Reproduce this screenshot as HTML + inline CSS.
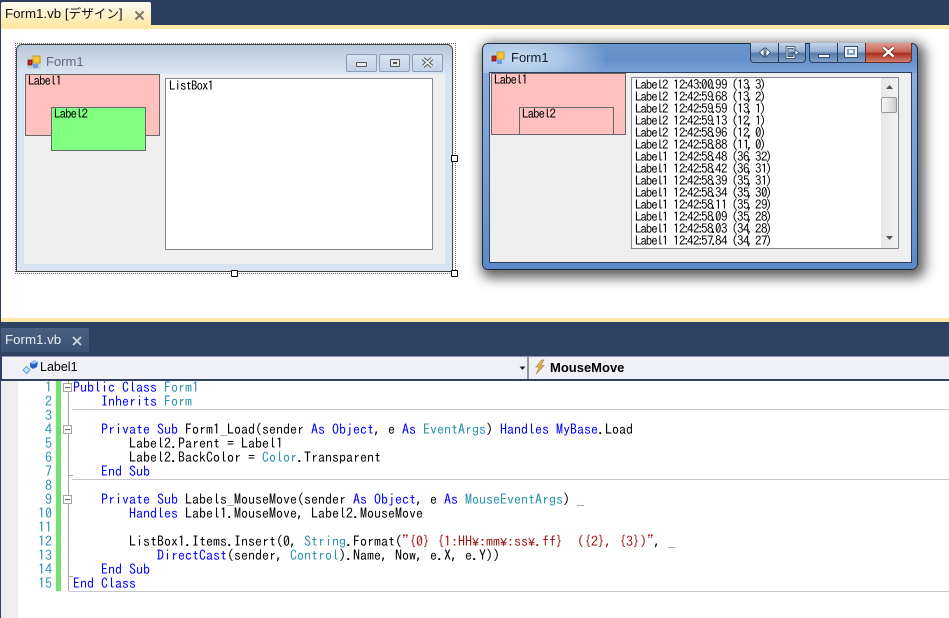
<!DOCTYPE html>
<html><head><meta charset="utf-8">
<style>
html,body{margin:0;padding:0;background:#fff}
body{width:949px;height:618px;position:relative;overflow:hidden;font-family:"IPAGothic","Liberation Sans",sans-serif}
div,span.a{position:absolute;box-sizing:border-box}
.t{white-space:pre;font-size:13px;letter-spacing:-1px;line-height:12px;color:#000}
.ui{font-family:"Liberation Sans","Noto Sans CJK JP",sans-serif;white-space:pre}
.c{position:absolute;left:73px;white-space:pre;font:14px/14px "IPAGothic","Liberation Mono",monospace;color:#000;height:14px}
.n{position:absolute;left:17px;width:35px;text-align:right;white-space:pre;font:14px/14px "IPAGothic","Liberation Mono",monospace;color:#2b91af;height:14px}
b{font-weight:normal;color:#0000ff}
i{font-style:normal;color:#2b91af}
u{text-decoration:none;color:#a31515}
var{font-style:normal;display:inline-block;width:7px;font-family:"Liberation Mono",monospace;font-size:12px;line-height:12px}
.h{width:7px;height:7px;background:#fff;border:1.5px solid #000;border-radius:1px}
.wb{border:1px solid #8a9db8;border-radius:2px;background:linear-gradient(#d9e4f1,#c2d2e6);height:18px;top:54px;width:31px}
.row{position:absolute;left:635px;height:12px}
.row span{position:absolute;top:0;white-space:pre;font:13px/12px "IPAGothic",sans-serif;letter-spacing:-.5px;color:#000}
.row span:first-child{letter-spacing:-1.1px}
em{font-style:normal;display:inline-block;width:2px;text-indent:-2px}
dfn{font-style:normal;display:inline-block;width:4px;text-indent:-1.5px}
cite{font-style:normal;display:inline-block;width:6px;text-indent:-2px}
</style></head><body>

<!-- top navy -->
<div style="left:0;top:0;width:949px;height:25px;background:#2d3f5e"></div>
<div style="left:1px;top:2px;width:150px;height:23px;border-radius:2px 2px 0 0;background:linear-gradient(#fffcf3 0,#fff3d3 45%,#ffe8a6 100%)"></div>
<div class="ui" style="left:5px;top:5px;font-size:13.3px;line-height:17px;color:#111">Form1.vb [<span style="font-size:12.6px">デザイン</span>]</div>
<svg style="position:absolute;left:134px;top:10px" width="11" height="11"><path d="M1.5 1.5L9.5 9.5M9.5 1.5L1.5 9.5" stroke="#7d7663" stroke-width="2"/></svg>
<div style="left:1px;top:25px;width:948px;height:4px;background:#ffe8a6"></div>
<div style="left:0;top:25px;width:1px;height:297px;background:#2d3f5e"></div>
<div style="left:1px;top:318px;width:948px;height:4px;background:#ffe8a6"></div>

<!-- Designer form -->
<div style="left:15px;top:43px;width:441px;height:231px;border:1px dotted #666"></div>
<div style="left:16px;top:44px;width:437px;height:78px;border:1px solid #444;border-bottom:none;border-radius:6px 6px 0 0;background:linear-gradient(#b9c8da,#d8e4f2 36%,#d8e4f2)"></div>
<div style="left:16px;top:122px;width:437px;height:150px;border:1px solid #444;border-top:none;background:#d8e4f2"></div>
<div style="left:24px;top:74px;width:421px;height:190px;background:#efefef"></div>
<svg style="position:absolute;left:27px;top:55px" width="14" height="14"><rect width="14" height="14" fill="#c8ced6"/><rect x="6" y="1" width="7" height="7" fill="#f6c530" stroke="#b08820" stroke-width=".7"/><rect x="1" y="5" width="4" height="5" fill="#cc2222" stroke="#771111" stroke-width=".7"/><rect x="6" y="9" width="5" height="4" fill="#6a9ee8"/></svg>
<div class="ui" style="left:46px;top:54px;font-size:13px;line-height:16px;color:#5f6a78">Form1</div>
<div class="wb" style="left:346px"></div>
<div class="wb" style="left:379px"></div>
<div class="wb" style="left:412px"></div>
<div style="left:356px;top:62px;width:11px;height:5px;background:#e8ecf2;border:1px solid #555;border-radius:1px"></div>
<div style="left:390px;top:59px;width:10px;height:8px;border:1.5px solid #555;border-radius:1px;background:#dde6f1"></div>
<div style="left:393px;top:62px;width:4px;height:2px;background:#555"></div>
<svg style="position:absolute;left:421px;top:57px" width="13" height="11"><path d="M2 1.5L11 9.5M11 1.5L2 9.5" stroke="#555" stroke-width="3.8"/><path d="M2 1.5L11 9.5M11 1.5L2 9.5" stroke="#eef2f6" stroke-width="1.8"/></svg>

<div style="left:25px;top:74px;width:135px;height:62px;background:#ffc0c0;border:1px solid #666"></div>
<div class="t" style="left:28px;top:75px">Label1</div>
<div style="left:51px;top:107px;width:95px;height:44px;background:#80ff80;border:1px solid #666"></div>
<div class="t" style="left:54px;top:108px">Label2</div>
<div style="left:165px;top:78px;width:268px;height:172px;background:#fff;border:1px solid #828790"></div>
<div class="t" style="left:169px;top:80px">ListBox1</div>

<div class="h" style="left:451px;top:155px"></div>
<div class="h" style="left:231px;top:270px"></div>
<div class="h" style="left:451px;top:270px"></div>

<!-- Running form -->
<div style="left:482px;top:43px;width:436px;height:227px;border-radius:6px;border:1px solid #1c2b3d;box-shadow:3px 4px 12px 4px rgba(0,0,0,.62);background:linear-gradient(90deg,#a9c3e4 0,#a9c3e4 8%,#6590c8 30%,#5f8cc8 70%,#7aa0d4 100%)"></div>
<div style="left:483px;top:44px;width:434px;height:29px;border-radius:5px 5px 0 0;background:radial-gradient(ellipse 90px 36px at 35px 14px,#c8daef 0,#a9c5e6 50%,rgba(100,145,200,0) 100%),linear-gradient(#6a94ca,#6390cb 55%,#7ba3d6)"></div>
<div style="left:483px;top:73px;width:434px;height:196px;border-radius:0 0 5px 5px;background:linear-gradient(#8aaddc,#6b97d0 70%,#5b8acb)"></div>
<div style="left:489px;top:72px;width:423px;height:191px;background:#efefef;border:1px solid #2b3f58"></div>
<svg style="position:absolute;left:491px;top:51px" width="14" height="14"><rect x="1" y="5" width="4" height="5" fill="#cc2222" stroke="#771111" stroke-width=".7"/><rect x="6" y="1" width="7" height="7" fill="#f6c530" stroke="#b08820" stroke-width=".7"/><rect x="6" y="9" width="5" height="4" fill="#6a9ee8"/></svg>
<div class="ui" style="left:511px;top:50px;font-size:13px;line-height:16px;color:#0c1a30">Form1</div>

<div style="left:750px;top:43px;width:56px;height:20px;border:1px solid #2b3f58;border-top:none;border-radius:0 0 4px 4px;background:linear-gradient(#c3d5ea,#94b1d4 45%,#577ba9 55%,#7fa0c9)"></div>
<div style="left:778px;top:43px;width:1px;height:19px;background:#2b3f58"></div>
<div style="left:809px;top:43px;width:103px;height:20px;border:1px solid #2b3f58;border-top:none;border-radius:0 0 4px 4px;background:linear-gradient(#c3d5ea,#94b1d4 45%,#577ba9 55%,#7fa0c9)"></div>
<div style="left:837px;top:43px;width:1px;height:19px;background:#2b3f58"></div>
<div style="left:865px;top:43px;width:47px;height:20px;border-radius:0 0 4px 0;border:1px solid #6b2a24;border-top:none;background:linear-gradient(#dc9b90,#c9695c 45%,#ad2d1f 55%,#d07f72)"></div>
<svg style="position:absolute;left:758px;top:47px" width="14" height="11"><path d="M6 1L1.5 5.5L6 10ZM8 1L12.5 5.5L8 10Z" fill="#fff" stroke="#33475f" stroke-width=".8"/></svg>
<svg style="position:absolute;left:785px;top:46px" width="15" height="13"><path d="M9 4V1.5H2V11.5H9V9" fill="none" stroke="#33475f" stroke-width="2.6"/><path d="M9 4V1.5H2V11.5H9V9" fill="none" stroke="#eef3f9" stroke-width="1"/><path d="M6 6.5H10V4L14 6.5L10 9.5V7.5H6Z" fill="#eef3f9" stroke="#33475f" stroke-width=".7"/></svg>
<div style="left:818px;top:54px;width:12px;height:4px;background:#f4f7fb;border:1px solid #3a4f6c"></div>
<div style="left:845px;top:47px;width:12px;height:10px;border:2px solid #f0f4f9;outline:1px solid #3a4f6c;background:#7d9ec6"></div>
<div style="left:849px;top:50px;width:4px;height:3px;background:#f0f4f9"></div>
<svg style="position:absolute;left:881px;top:46px" width="15" height="12"><path d="M2.5 1.5L12.5 10.5M12.5 1.5L2.5 10.5" stroke="#5a2a26" stroke-width="4"/><path d="M2.5 1.5L12.5 10.5M12.5 1.5L2.5 10.5" stroke="#fff" stroke-width="2.4"/></svg>

<div style="left:491px;top:73px;width:135px;height:62px;background:#ffc0c0;border:1px solid #666"></div>
<div class="t" style="left:494px;top:74px">Label1</div>
<div style="left:519px;top:107px;width:95px;height:28px;border:1px solid #666;border-bottom:none"></div>
<div class="t" style="left:522px;top:108px">Label2</div>

<div style="left:631px;top:77px;width:268px;height:172px;background:#fff;border:1px solid #828790"></div>
<div style="left:881px;top:78px;width:17px;height:170px;background:linear-gradient(90deg,#e6e6e6,#f2f2f2)"></div>
<div style="left:881px;top:97px;width:16px;height:16px;border:1px solid #9a9a9a;border-radius:2px;background:linear-gradient(90deg,#f5f5f5,#e4e4e4 55%,#c9c9c9)"></div>
<svg style="position:absolute;left:885px;top:84px" width="9" height="6"><path d="M4.5 1L8 5H1Z" fill="#555"/></svg>
<svg style="position:absolute;left:885px;top:235px" width="9" height="6"><path d="M1 1H8L4.5 5Z" fill="#555"/></svg>

<div class="row" style="top:79px"><span>Label2</span><span style="left:38px">12<em>:</em>43<em>:</em>00<em>.</em>99</span><span style="left:98px"><dfn>(</dfn>13<cite>,</cite>3<dfn>)</dfn></span></div>
<div class="row" style="top:91px"><span>Label2</span><span style="left:38px">12<em>:</em>42<em>:</em>59<em>.</em>68</span><span style="left:98px"><dfn>(</dfn>13<cite>,</cite>2<dfn>)</dfn></span></div>
<div class="row" style="top:103px"><span>Label2</span><span style="left:38px">12<em>:</em>42<em>:</em>59<em>.</em>59</span><span style="left:98px"><dfn>(</dfn>13<cite>,</cite>1<dfn>)</dfn></span></div>
<div class="row" style="top:115px"><span>Label2</span><span style="left:38px">12<em>:</em>42<em>:</em>59<em>.</em>13</span><span style="left:98px"><dfn>(</dfn>12<cite>,</cite>1<dfn>)</dfn></span></div>
<div class="row" style="top:127px"><span>Label2</span><span style="left:38px">12<em>:</em>42<em>:</em>58<em>.</em>96</span><span style="left:98px"><dfn>(</dfn>12<cite>,</cite>0<dfn>)</dfn></span></div>
<div class="row" style="top:139px"><span>Label2</span><span style="left:38px">12<em>:</em>42<em>:</em>58<em>.</em>88</span><span style="left:98px"><dfn>(</dfn>11<cite>,</cite>0<dfn>)</dfn></span></div>
<div class="row" style="top:151px"><span>Label1</span><span style="left:38px">12<em>:</em>42<em>:</em>58<em>.</em>48</span><span style="left:98px"><dfn>(</dfn>36<cite>,</cite>32<dfn>)</dfn></span></div>
<div class="row" style="top:163px"><span>Label1</span><span style="left:38px">12<em>:</em>42<em>:</em>58<em>.</em>42</span><span style="left:98px"><dfn>(</dfn>36<cite>,</cite>31<dfn>)</dfn></span></div>
<div class="row" style="top:175px"><span>Label1</span><span style="left:38px">12<em>:</em>42<em>:</em>58<em>.</em>39</span><span style="left:98px"><dfn>(</dfn>35<cite>,</cite>31<dfn>)</dfn></span></div>
<div class="row" style="top:187px"><span>Label1</span><span style="left:38px">12<em>:</em>42<em>:</em>58<em>.</em>34</span><span style="left:98px"><dfn>(</dfn>35<cite>,</cite>30<dfn>)</dfn></span></div>
<div class="row" style="top:199px"><span>Label1</span><span style="left:38px">12<em>:</em>42<em>:</em>58<em>.</em>11</span><span style="left:98px"><dfn>(</dfn>35<cite>,</cite>29<dfn>)</dfn></span></div>
<div class="row" style="top:211px"><span>Label1</span><span style="left:38px">12<em>:</em>42<em>:</em>58<em>.</em>09</span><span style="left:98px"><dfn>(</dfn>35<cite>,</cite>28<dfn>)</dfn></span></div>
<div class="row" style="top:223px"><span>Label1</span><span style="left:38px">12<em>:</em>42<em>:</em>58<em>.</em>03</span><span style="left:98px"><dfn>(</dfn>34<cite>,</cite>28<dfn>)</dfn></span></div>
<div class="row" style="top:235px"><span>Label1</span><span style="left:38px">12<em>:</em>42<em>:</em>57<em>.</em>84</span><span style="left:98px"><dfn>(</dfn>34<cite>,</cite>27<dfn>)</dfn></span></div>

<!-- lower navy band -->
<div style="left:0;top:322px;width:949px;height:34px;background:#2f4263"></div>
<div style="left:1px;top:328px;width:88px;height:24px;border-radius:2px 2px 0 0;background:linear-gradient(#4a5f80,#3c5275)"></div>
<div class="ui" style="left:5px;top:331px;font-size:13.3px;line-height:17px;color:#e9edf3">Form1.vb</div>
<svg style="position:absolute;left:72px;top:336px" width="10" height="10"><path d="M1 1L9 9M9 1L1 9" stroke="#cfd6e0" stroke-width="1.8"/></svg>
<div style="left:0;top:352px;width:949px;height:4px;background:#2f4263"></div>

<!-- combo bar -->
<div style="left:0;top:356px;width:949px;height:25px;background:#f0f1f7;border-top:1px solid #8c97ab;border-bottom:2px solid #2f4263"></div>
<div style="left:0;top:356px;width:2px;height:24px;background:#2f4263"></div>
<div style="left:527px;top:357px;width:2px;height:22px;background:#8c97ab"></div>
<svg style="position:absolute;left:21px;top:358px" width="18" height="18"><path d="M2 12L5.5 8.5L9 12L5.5 15.5Z" fill="#cfe6fb" stroke="#5d9fe0"/><path d="M9 5L13 2L17 4L16 9L12 11L9 9Z" fill="#2a62c8"/><path d="M13 2L17 4L13 6L9 5Z" fill="#9cc6f3"/></svg>
<div class="ui" style="left:40px;top:360px;font-size:12.5px;line-height:15px;color:#000">Label1</div>
<svg style="position:absolute;left:519px;top:366px" width="7" height="5"><path d="M0.5 0.5H6.5L3.5 4Z" fill="#222"/></svg>
<svg style="position:absolute;left:533px;top:359px" width="13" height="16"><path d="M9 1L3 8H6.5L3 15L11 6.5H7.5L11 1Z" fill="#f2b53e" stroke="#a98a55" stroke-width=".8"/></svg>
<div class="ui" style="left:550px;top:360px;font-size:13px;line-height:15px;font-weight:bold;color:#000">MouseMove</div>

<!-- editor margin -->
<div style="left:0;top:380px;width:1px;height:238px;background:#2f4263"></div>
<div style="left:1px;top:381px;width:17px;height:237px;background:#eeeeee"></div>
<div style="left:56px;top:381px;width:5px;height:210px;background:#6fe26f"></div>

<!-- outlining -->
<div style="left:68px;top:381px;width:1px;height:210px;background:#a5a5a5"></div>
<div style="left:63px;top:383px;width:9px;height:9px;background:#fff;border:1px solid #a5a5a5"></div><div style="left:65px;top:387px;width:5px;height:1px;background:#666"></div>
<div style="left:63px;top:425px;width:9px;height:9px;background:#fff;border:1px solid #a5a5a5"></div><div style="left:65px;top:429px;width:5px;height:1px;background:#666"></div>
<div style="left:63px;top:495px;width:9px;height:9px;background:#fff;border:1px solid #a5a5a5"></div><div style="left:65px;top:499px;width:5px;height:1px;background:#666"></div>
<div style="left:69px;top:475px;width:4px;height:1px;background:#a5a5a5"></div>
<div style="left:69px;top:576px;width:4px;height:1px;background:#a5a5a5"></div>
<div style="left:72px;top:409px;width:877px;height:1px;background:#c8c8c8"></div>
<div style="left:72px;top:479px;width:877px;height:1px;background:#c8c8c8"></div>
<div style="left:69px;top:591px;width:880px;height:1px;background:#c8c8c8"></div>

<!-- line numbers -->
<div class="n" style="top:380px">1</div>
<div class="n" style="top:394px">2</div>
<div class="n" style="top:408px">3</div>
<div class="n" style="top:422px">4</div>
<div class="n" style="top:436px">5</div>
<div class="n" style="top:450px">6</div>
<div class="n" style="top:464px">7</div>
<div class="n" style="top:478px">8</div>
<div class="n" style="top:492px">9</div>
<div class="n" style="top:506px">10</div>
<div class="n" style="top:520px">11</div>
<div class="n" style="top:534px">12</div>
<div class="n" style="top:548px">13</div>
<div class="n" style="top:562px">14</div>
<div class="n" style="top:576px">15</div>

<!-- code -->
<div class="c" style="top:380px"><b>Public</b> <b>Class</b> <i>Form1</i></div>
<div class="c" style="top:394px">    <b>Inherits</b> <i>Form</i></div>
<div class="c" style="top:422px">    <b>Private</b> <b>Sub</b> Form1_Load(sender <b>As</b> <b>Object</b>, e <b>As</b> <i>EventArgs</i>) <b>Handles</b> <b>MyBase</b>.Load</div>
<div class="c" style="top:436px">        Label2.Parent = Label1</div>
<div class="c" style="top:450px">        Label2.BackColor = <i>Color</i>.Transparent</div>
<div class="c" style="top:464px">    <b>End</b> <b>Sub</b></div>
<div class="c" style="top:492px">    <b>Private</b> <b>Sub</b> Labels_MouseMove(sender <b>As</b> <b>Object</b>, e <b>As</b> <i>MouseEventArgs</i>) _</div>
<div class="c" style="top:506px">        <b>Handles</b> Label1.MouseMove, Label2.MouseMove</div>
<div class="c" style="top:534px">        ListBox1.Items.Insert(0, <i>String</i>.Format(<u>"{0} {1:HH<var>¥</var>:mm<var>¥</var>:ss<var>¥</var>.ff}  ({2}, {3})"</u>, _</div>
<div class="c" style="top:548px">            <b>DirectCast</b>(sender, <i>Control</i>).Name, Now, e.X, e.Y))</div>
<div class="c" style="top:562px">    <b>End</b> <b>Sub</b></div>
<div class="c" style="top:576px"><b>End</b> <b>Class</b></div>

</body></html>
